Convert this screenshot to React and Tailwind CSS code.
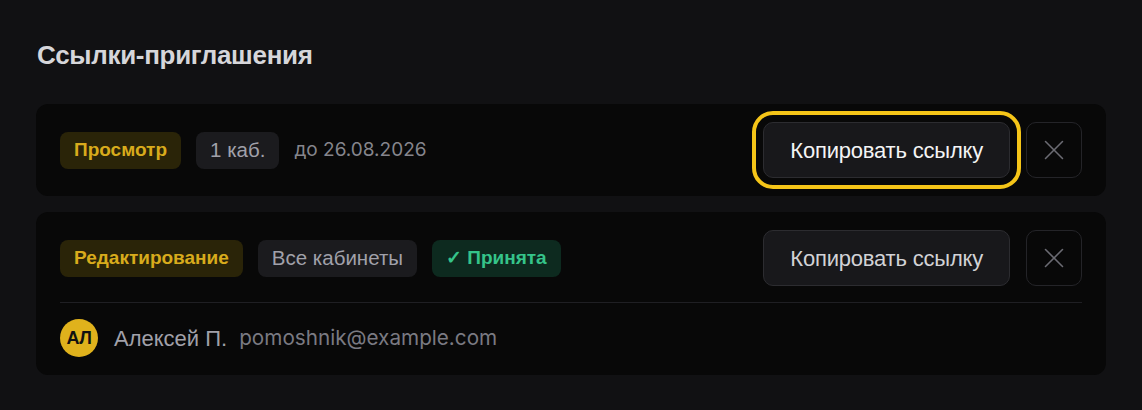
import { X } from "lucide-react";

const sans = "font-['Liberation_Sans',Arial,sans-serif]";
const inter = "font-['Inter','Liberation_Sans',sans-serif]";

function Badge({ tone, children }) {
  const tones = {
    yellow: "bg-[#2a2408] text-[#d8ab1c] font-bold text-[19px]",
    gray: "bg-[#1b1b1e] text-[#a1a1aa] text-[20.5px]",
    green: "bg-[#0d2a1f] text-[#35c48a] font-bold text-[19px]",
  };
  return (
    <span
      className={`${sans} ${tones[tone]} h-[37px] px-[14px] rounded-lg flex items-center`}
    >
      {children}
    </span>
  );
}

function Actions({ focused }) {
  return (
    <div className="flex items-center gap-4">
      <button
        className={`${sans} h-14 px-[26px] rounded-[10px] bg-[#18181b] border border-[#2c2c30] text-[22px] tracking-[-0.2px] ${
          focused
            ? "text-[#f4f4f5] outline-4 outline-offset-[7px] outline-[#f5c518]"
            : "text-[#d2d2d6]"
        }`}
      >
        Копировать ссылку
      </button>
      <button className="w-14 h-14 rounded-[10px] border border-[#242428] flex items-center justify-center text-[#6b6b73]">
        <X size={34} strokeWidth={1.1} />
      </button>
    </div>
  );
}

export default function App() {
  return (
    <div className="min-h-[410px] bg-[#111113] px-9 pt-[39px] pb-9">
      <h2 className={`${sans} text-[26px] font-bold text-[#d6d6da] tracking-[-0.3px] leading-8 mb-[33px] pl-px`}>
        Ссылки-приглашения
      </h2>

      <div className="flex flex-col gap-4">
        <div className="bg-[#080808] rounded-xl px-6 py-[18px] flex items-center justify-between">
          <div className="flex items-center gap-[15px]">
            <Badge tone="yellow">Просмотр</Badge>
            <Badge tone="gray">1 каб.</Badge>
            <span className={`${inter} text-[19px] text-[#85858c]`}>до 26.08.2026</span>
          </div>
          <Actions focused />
        </div>

        <div className="bg-[#080808] rounded-xl px-6 py-[18px]">
          <div className="flex items-center justify-between">
            <div className="flex items-center gap-[15px]">
              <Badge tone="yellow">Редактирование</Badge>
              <Badge tone="gray">Все кабинеты</Badge>
              <Badge tone="green">✓ Принята</Badge>
            </div>
            <Actions />
          </div>
          <div className="mt-4 pt-4 border-t border-[#1f1f23] flex items-center">
            <span className={`${sans} w-[38px] h-[38px] rounded-full bg-[#e0b21c] text-[#111] font-bold text-[18px] flex items-center justify-center tracking-[-0.5px] mr-4`}>
              АЛ
            </span>
            <span className={`${sans} text-[22px] text-[#a1a1aa] mr-3`}>Алексей П.</span>
            <span className={`${inter} text-[20.7px] text-[#7a7a82]`}>pomoshnik@example.com</span>
          </div>
        </div>
      </div>
    </div>
  );
}
